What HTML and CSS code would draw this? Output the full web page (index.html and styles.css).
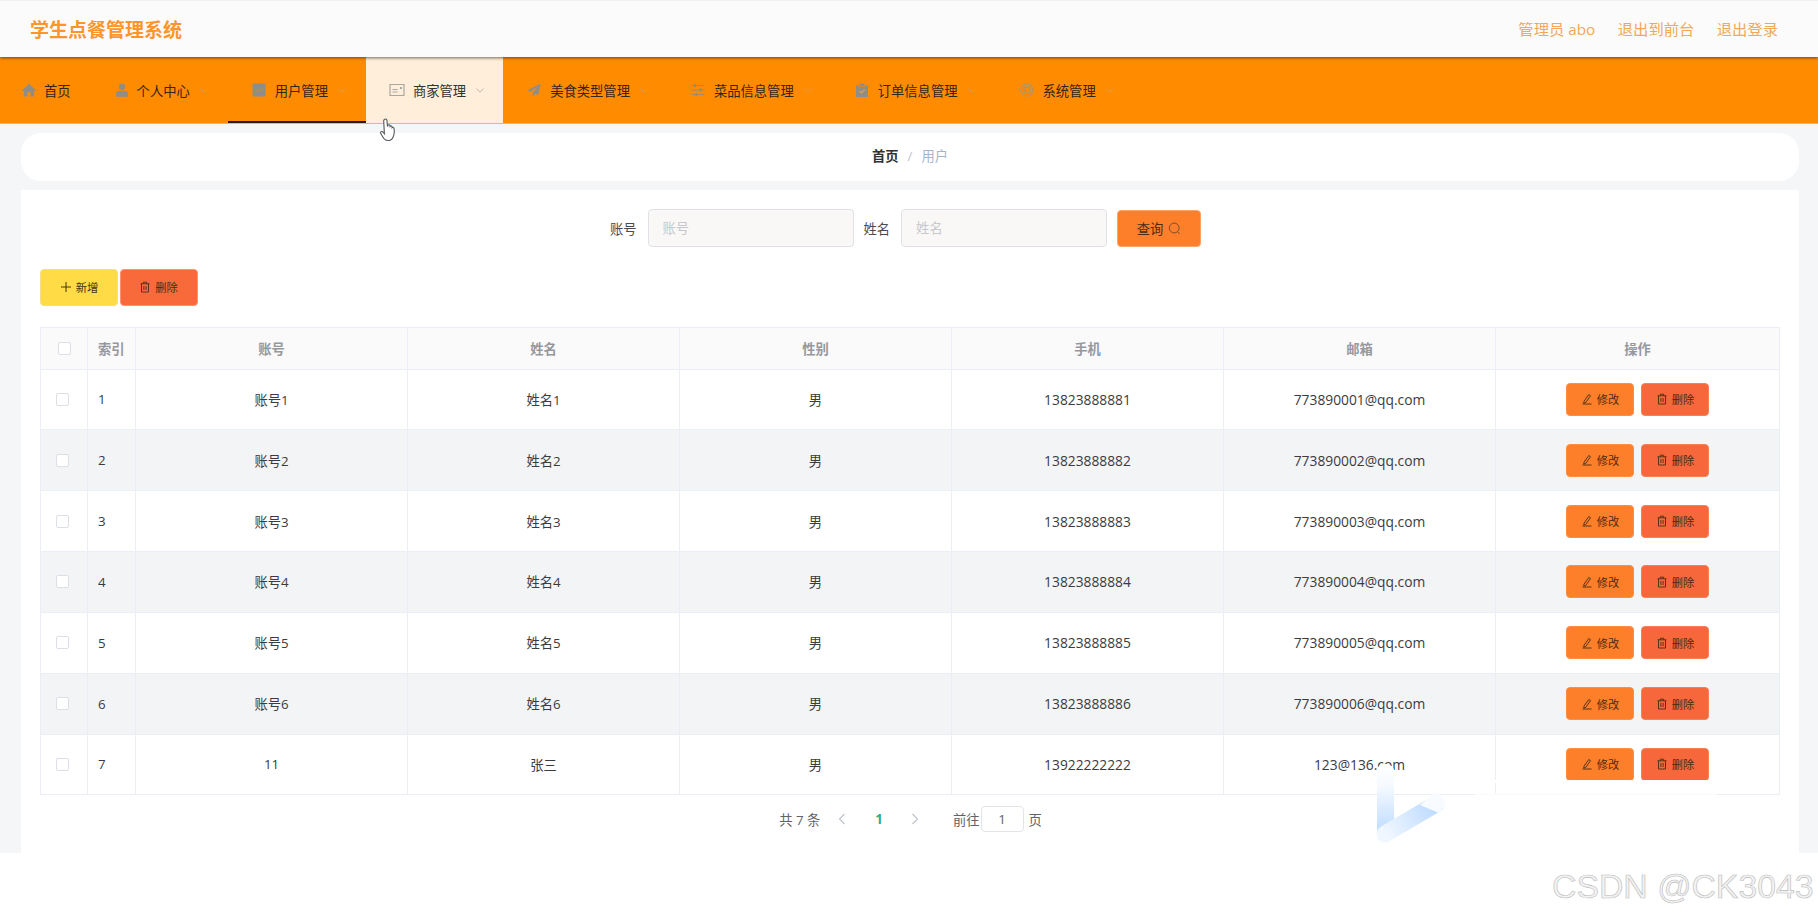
FILE: index.html
```html
<!DOCTYPE html>
<html lang="zh-CN">
<head>
<meta charset="utf-8">
<title>学生点餐管理系统</title>
<link rel="stylesheet" href="styles.css">
</head>
<body>
<svg class="sprite" aria-hidden="true">
  <symbol id="i-chev" viewBox="0 0 8 5"><path d="M.5.5 4 4.200 7.500.5" fill="none" stroke="currentColor" stroke-width="1"/></symbol>
  <symbol id="i-plus" viewBox="0 0 12 12"><path d="M6 1v10M1 6h10" fill="none" stroke="currentColor" stroke-width="1"/></symbol>
  <symbol id="i-trash" viewBox="0 0 12 12"><path d="M1.500 2.800h9M4.300 2.800V1.200h3.400v1.600M2.500 2.800v8.200h7V2.800M4.900 5v4M7.100 5v4" fill="none" stroke="currentColor" stroke-width=".9"/></symbol>
  <symbol id="i-edit" viewBox="0 0 12 12"><path d="M3 8.200 7.800 1.500l1.700 1.200L4.800 9.400l-2 .7zM1.500 11h9" fill="none" stroke="currentColor" stroke-width=".9"/></symbol>
  <symbol id="i-search" viewBox="0 0 13 13"><circle cx="6.200" cy="6" r="4.900" fill="none" stroke="currentColor" stroke-width="1"/><path d="m9.500 9.500 2 2.300" fill="none" stroke="currentColor" stroke-width="1"/></symbol>
</svg>

<div class="page">
  <header class="topbar">
    <div class="brand">学生点餐管理系统</div>
    <div class="top-links">
      <span>管理员 abo</span>
      <span>退出到前台</span>
      <span>退出登录</span>
    </div>
  </header>

  <nav class="nav">
    <a class="nav-item nav-first">
      <svg class="nav-icon" viewBox="0 0 14 14"><path d="M7 .8 0 7.200l1 1 .8-.7V13.600h3.700V9.300h3V13.600h3.700V7.500l.8.700 1-1z"/></svg>
      <span>首页</span>
    </a>
    <a class="nav-item nav-tight">
      <svg class="nav-icon" viewBox="0 0 14 14"><circle cx="7" cy="3.700" r="3.200"/><path d="M1 13.800V11c0-2 1.700-3.200 3.500-3.200h5c1.800 0 3.500 1.200 3.500 3.200v2.800z"/></svg>
      <span>个人中心</span>
      <svg class="chev"><use href="#i-chev"/></svg>
    </a>
    <a class="nav-item is-active">
      <svg class="nav-icon" viewBox="0 0 14 14"><path d="M.5.500h13v13H.5z"/><path d="m2.500 10 3-3 2 1.500 4-4.500" fill="none" stroke="#c98a3a" stroke-width="1"/></svg>
      <span>用户管理</span>
      <svg class="chev"><use href="#i-chev"/></svg>
    </a>
    <a class="nav-item is-hover">
      <svg class="nav-icon nav-icon-wide" viewBox="0 0 16 14"><path d="M1 1.500h14v11H1z" fill="none" stroke="#a9a7a3" stroke-width="1.200"/><path d="M3.500 6.500h5M3.500 9h5" fill="none" stroke="#a9a7a3" stroke-width="1"/><path d="M11 4h2v2h-2z" fill="#a9a7a3"/></svg>
      <span>商家管理</span>
      <svg class="chev"><use href="#i-chev"/></svg>
    </a>
    <a class="nav-item nav-six">
      <svg class="nav-icon" viewBox="0 0 14 14"><path d="M13.800.400.300 7.200l3.400 1.500L11.500 3 5.700 9.700v4l2.500-3 2.900 1.300z"/></svg>
      <span>美食类型管理</span>
      <svg class="chev"><use href="#i-chev"/></svg>
    </a>
    <a class="nav-item nav-six">
      <svg class="nav-icon" viewBox="0 0 14 14"><path d="M.5 2.500h13M.5 7h13M.5 11.500h13" fill="none" stroke="#a08a68" stroke-width="1"/><path d="M3 .8h2v3.400H3zM8.500 5.300h2v3.400h-2zM4.500 9.800h2v3.400h-2z" fill="#a08a68"/></svg>
      <span>菜品信息管理</span>
      <svg class="chev"><use href="#i-chev"/></svg>
    </a>
    <a class="nav-item nav-six">
      <svg class="nav-icon" viewBox="0 0 14 14"><path d="M1 2h2.500v1.500h7V2H13v12H1zM4.500.5h5v2.500h-5z"/><path d="m4.300 8 2 2 3.500-3.500" fill="none" stroke="#d8a050" stroke-width="1.200"/></svg>
      <span>订单信息管理</span>
      <svg class="chev"><use href="#i-chev"/></svg>
    </a>
    <a class="nav-item nav-last">
      <svg class="nav-icon nav-icon-wide" viewBox="0 0 16 16"><circle cx="8" cy="8" r="7" fill="none" stroke="#b9935c" stroke-width="1.600"/><circle cx="8" cy="8" r="3.800" fill="none" stroke="#b9935c" stroke-width="1.600"/></svg>
      <span>系统管理</span>
      <svg class="chev"><use href="#i-chev"/></svg>
    </a>
  </nav>

  <main class="content">
    <div class="crumbs">
      <span class="crumb-home">首页</span>
      <span class="crumb-sep">/</span>
      <span class="crumb-cur">用户</span>
    </div>

    <section class="card">
      <form class="search">
        <label class="search-label">账号</label>
        <input class="search-input" placeholder="账号">
        <label class="search-label">姓名</label>
        <input class="search-input" placeholder="姓名">
        <button class="btn btn-query" type="button">查询<svg class="ico-search"><use href="#i-search"/></svg></button>
      </form>

      <div class="toolbar">
        <button class="btn btn-add" type="button"><svg class="ico"><use href="#i-plus"/></svg>新增</button>
        <button class="btn btn-del-top" type="button"><svg class="ico"><use href="#i-trash"/></svg>删除</button>
      </div>

      <table class="grid">
        <colgroup>
          <col class="c-check"><col class="c-index"><col class="c-data"><col class="c-data"><col class="c-data"><col class="c-data"><col class="c-data"><col class="c-ops">
        </colgroup>
        <thead>
          <tr>
            <th class="cell-check head-check"><span class="checkbox"></span></th>
            <th class="cell-index head-index">索引</th>
            <th>账号</th><th>姓名</th><th>性别</th><th>手机</th><th>邮箱</th><th>操作</th>
          </tr>
        </thead>
        <tbody>
          <tr>
            <td class="cell-check"><span class="checkbox"></span></td><td class="cell-index">1</td>
            <td>账号1</td><td>姓名1</td><td>男</td><td class="cell-latin">13823888881</td><td class="cell-latin">773890001@qq.com</td>
            <td><div class="ops"><button class="btn btn-edit" type="button"><svg class="ico"><use href="#i-edit"/></svg>修改</button><button class="btn btn-del" type="button"><svg class="ico"><use href="#i-trash"/></svg>删除</button></div></td>
          </tr>
          <tr>
            <td class="cell-check"><span class="checkbox"></span></td><td class="cell-index">2</td>
            <td>账号2</td><td>姓名2</td><td>男</td><td class="cell-latin">13823888882</td><td class="cell-latin">773890002@qq.com</td>
            <td><div class="ops"><button class="btn btn-edit" type="button"><svg class="ico"><use href="#i-edit"/></svg>修改</button><button class="btn btn-del" type="button"><svg class="ico"><use href="#i-trash"/></svg>删除</button></div></td>
          </tr>
          <tr>
            <td class="cell-check"><span class="checkbox"></span></td><td class="cell-index">3</td>
            <td>账号3</td><td>姓名3</td><td>男</td><td class="cell-latin">13823888883</td><td class="cell-latin">773890003@qq.com</td>
            <td><div class="ops"><button class="btn btn-edit" type="button"><svg class="ico"><use href="#i-edit"/></svg>修改</button><button class="btn btn-del" type="button"><svg class="ico"><use href="#i-trash"/></svg>删除</button></div></td>
          </tr>
          <tr>
            <td class="cell-check"><span class="checkbox"></span></td><td class="cell-index">4</td>
            <td>账号4</td><td>姓名4</td><td>男</td><td class="cell-latin">13823888884</td><td class="cell-latin">773890004@qq.com</td>
            <td><div class="ops"><button class="btn btn-edit" type="button"><svg class="ico"><use href="#i-edit"/></svg>修改</button><button class="btn btn-del" type="button"><svg class="ico"><use href="#i-trash"/></svg>删除</button></div></td>
          </tr>
          <tr>
            <td class="cell-check"><span class="checkbox"></span></td><td class="cell-index">5</td>
            <td>账号5</td><td>姓名5</td><td>男</td><td class="cell-latin">13823888885</td><td class="cell-latin">773890005@qq.com</td>
            <td><div class="ops"><button class="btn btn-edit" type="button"><svg class="ico"><use href="#i-edit"/></svg>修改</button><button class="btn btn-del" type="button"><svg class="ico"><use href="#i-trash"/></svg>删除</button></div></td>
          </tr>
          <tr>
            <td class="cell-check"><span class="checkbox"></span></td><td class="cell-index">6</td>
            <td>账号6</td><td>姓名6</td><td>男</td><td class="cell-latin">13823888886</td><td class="cell-latin">773890006@qq.com</td>
            <td><div class="ops"><button class="btn btn-edit" type="button"><svg class="ico"><use href="#i-edit"/></svg>修改</button><button class="btn btn-del" type="button"><svg class="ico"><use href="#i-trash"/></svg>删除</button></div></td>
          </tr>
          <tr>
            <td class="cell-check"><span class="checkbox"></span></td><td class="cell-index">7</td>
            <td>11</td><td>张三</td><td>男</td><td class="cell-latin">13922222222</td><td class="cell-latin">123@136.com</td>
            <td><div class="ops"><button class="btn btn-edit" type="button"><svg class="ico"><use href="#i-edit"/></svg>修改</button><button class="btn btn-del" type="button"><svg class="ico"><use href="#i-trash"/></svg>删除</button></div></td>
          </tr>
        </tbody>
      </table>

      <div class="pager">
        <span class="pager-total">共 7 条</span>
        <svg class="pager-arrow" viewBox="0 0 8 12"><path d="M6.500 1 1.500 6l5 5" fill="none" stroke="currentColor" stroke-width="1.200"/></svg>
        <span class="pager-num">1</span>
        <svg class="pager-arrow" viewBox="0 0 8 12"><path d="m1.500 1 5 5-5 5" fill="none" stroke="currentColor" stroke-width="1.200"/></svg>
        <span class="pager-goto">前往</span>
        <span class="pager-box">1</span>
        <span class="pager-unit">页</span>
      </div>
    </section>
  </main>
</div>

<svg class="cursor" viewBox="0 0 17 24"><path d="M5 1.200c.9-.5 1.800 0 1.900 1l.6 6.300.5-1.300c.5-.8 1.600-.6 1.900.3l.2 1c.5-.8 1.600-.6 1.900.3l.1.900c.6-.6 1.700-.3 1.900.7.500 2.600.4 5.500-.6 8-.7 2-1.900 3.800-4.100 4.100-2.300.3-4.400-.5-5.700-2.300L.8 15.500c-.6-1-.1-2 .9-2 .9 0 1.700.8 2.700 2.100L3.700 3c-.1-.8.500-1.500 1.300-1.800z" fill="#fff" stroke="#55565c" stroke-width="1.100"/></svg>

<div class="smudge"></div>
<svg class="wm-logo" viewBox="0 -5 70 81">
  <defs>
    <linearGradient id="wm-a" x1="0" y1="0" x2="0" y2="1"><stop offset="0" stop-color="#fff"/><stop offset=".3" stop-color="#f6faff"/><stop offset="1" stop-color="#b9d9ff"/></linearGradient>
    <linearGradient id="wm-b" gradientUnits="userSpaceOnUse" x1="9" y1="66" x2="62" y2="36"><stop offset="0" stop-color="#f1f7ff"/><stop offset="1" stop-color="#b9d9ff"/></linearGradient>
  </defs>
  <path d="M1 3C1-2 5-4 9-4s9 2 9 7v56l-17 9z" fill="url(#wm-a)"/>
  <path d="M9 66 60 36" fill="none" stroke="url(#wm-b)" stroke-width="17" stroke-linecap="round"/>
  <path d="M44 37 58 25Q70 27 69 38L63 45Z" fill="#f8fbff"/>
</svg>
<div class="wm-text">CSDN @CK3043</div>
</body>
</html>
```

FILE: styles.css
```css
* { box-sizing: border-box; }

html, body {
  margin: 0;
  height: 100%;
  background: #fff;
}

body {
  font-family: "Open Sans", "Noto Sans CJK SC", sans-serif;
  font-size: 13.3px;
  color: #303133;
  overflow: hidden;
}

.sprite { display: none; }

.page { background: #f5f6f8; }

/* top bar */
.topbar {
  position: relative;
  z-index: 2;
  height: 57px;
  display: flex;
  align-items: center;
  justify-content: space-between;
  padding: 0 40px 0 30px;
  background: #fbfbfc;
  border-top: 1px solid #f0f0f3;
  box-shadow: 0 1px 3px rgba(40, 30, 20, .65);
}

.brand {
  font-size: 19px;
  font-weight: 700;
  color: #fd952a;
}

.top-links {
  display: flex;
  gap: 22.5px;
  padding-bottom: 2px;
  font-size: 15.3px;
  color: #f2a858;
}

/* nav */
.nav {
  height: 67px;
  display: flex;
  background: #ff8c00;
  border-bottom: 1px solid #ffb25c;
}

.nav-item {
  display: flex;
  align-items: center;
  height: 66px;
  padding: 0 20px 0 24px;
  color: #33261c;
  white-space: nowrap;
}

.nav-first { padding: 0 22px; }
.nav-tight { padding-left: 22px; }
.nav-six { padding-right: 19px; }
.nav-last { padding-left: 25px; }

.nav-first .nav-icon,
.nav-tight .nav-icon { margin-right: 8px; }

.nav-icon {
  width: 14px;
  height: 14px;
  margin-right: 9px;
  flex: none;
  fill: #8f8d88;
}

.nav-icon-wide {
  width: 16px;
  margin-right: 8px;
  margin-left: -1px;
}

.chev {
  width: 8px;
  height: 5px;
  margin-left: 10px;
  color: #e29a48;
  flex: none;
}

.is-active {
  box-shadow: inset 0 -2px 0 #2c1c22;
}

.is-hover {
  padding-right: 19px;
  background: #feeeda;
  color: #303133;
}

.is-hover .chev { color: #bdb9b2; }

/* content */
.content { padding: 9px 19px 0 21px; }

.crumbs {
  height: 48px;
  display: flex;
  align-items: center;
  justify-content: center;
  gap: 9px;
  padding: 0 0 3px 0;
  background: #fff;
  border-radius: 20px;
}

.crumb-home { font-weight: 700; color: #303133; }
.crumb-sep { color: #c0c4cc; }
.crumb-cur { color: #a8b4c8; }

.card {
  margin-top: 9px;
  height: 663px;
  padding: 19px 20px 0 19px;
  background: #fff;
}

/* search */
.search {
  display: flex;
  align-items: center;
  justify-content: center;
  padding-right: 8px;
  height: 38px;
}

.search-label {
  margin-right: 11px;
  color: #4a4b4f;
}

.search-input {
  width: 206px;
  height: 38px;
  margin-right: 10px;
  padding: 0 14px;
  font: inherit;
  background: #faf8f7;
  border: 1px solid #dfe1e6;
  border-radius: 4px;
  outline: none;
}

.search-input::placeholder { color: #c6c8cd; }

.btn {
  display: inline-flex;
  align-items: center;
  justify-content: center;
  padding: 0;
  font-family: inherit;
  color: #4a2c14;
  border: 1px solid transparent;
  border-radius: 4px;
  cursor: pointer;
}

.btn-query {
  width: 84px;
  height: 37px;
  font-size: 13.3px;
  background: #fd7f29;
  border-color: #fda368;
}

.ico-search {
  width: 13px;
  height: 13px;
  margin-left: 5px;
  color: #7a5030;
}

.ico {
  width: 12px;
  height: 12px;
  margin-right: 4px;
  flex: none;
}

/* toolbar */
.toolbar {
  display: flex;
  gap: 1.5px;
  margin-top: 21.5px;
}

.toolbar .btn {
  width: 78px;
  height: 37.5px;
  font-size: 11.3px;
}

.btn-add {
  background: #ffdc45;
  border-color: #f3dc8a;
  color: #3e3518;
}

.btn-del-top {
  background: #f96a3a;
  border-color: #fa9272;
}

/* table */
.grid {
  width: 1739px;
  margin-top: 20.5px;
  table-layout: fixed;
  border-collapse: collapse;
  color: #3a3b3f;
}

.c-check { width: 47px; }
.c-index { width: 48px; }
.c-data { width: 272px; }
.c-ops { width: 284px; }

.grid th,
.grid td {
  padding: 0;
  text-align: center;
  border: 1px solid #ebeef5;
}

.grid th {
  height: 42px;
  font-weight: 700;
  font-size: 13.3px;
  color: #96989d;
  background: #fafafb;
}

.grid td { height: 60.85px; }

.grid tbody tr:nth-child(even) td { background: #f3f4f6; }

.grid .cell-latin { font-size: 13.8px; }

.grid .cell-index {
  text-align: left;
  padding-left: 10px;
}

.grid .head-index { padding-left: 10px; }

.grid .cell-check {
  text-align: left;
  padding-left: 15px;
}

.grid .head-check { padding-left: 17px; }

.checkbox {
  display: block;
  width: 13px;
  height: 13px;
  background: #fff;
  border: 1px solid #dcdfe6;
  border-radius: 2px;
}

.ops {
  display: flex;
  justify-content: center;
  gap: 7px;
}

.ops .btn {
  width: 68px;
  height: 33px;
  font-size: 11.2px;
}

.btn-edit { background: #fd7f29; border-color: #fd8f45; }
.btn-del { background: #f6683b; border-color: #f77f59; }

/* pager */
.pager {
  display: flex;
  align-items: center;
  justify-content: center;
  margin-top: 11px;
  padding-left: 2px;
  height: 26px;
  color: #606266;
}

.pager-arrow {
  width: 8px;
  height: 12px;
  color: #c0c4cc;
}

.pager-total { margin-right: 18px; }
.pager-num {
  margin: 0 28px 0 29px;
  font-weight: 700;
  color: #2bb08f;
}
.pager-goto { margin-left: 34px; margin-right: 1px; }

.pager-box {
  width: 43px;
  height: 26px;
  display: flex;
  align-items: center;
  justify-content: center;
  border: 1px solid #e2e4e9;
  border-radius: 4px;
}

.pager-unit { margin-left: 5px; }

/* overlays lying over the page */
.cursor {
  position: absolute;
  left: 380px;
  top: 118px;
  width: 17px;
  height: 24px;
  z-index: 5;
}

.smudge {
  position: absolute;
  left: 1475px;
  top: 780px;
  width: 241px;
  height: 17px;
  background: linear-gradient(to bottom, #fff 0 3px, transparent 3px 13px, rgba(255, 255, 255, .75) 13px 17px);
}

.wm-logo {
  position: absolute;
  left: 1376px;
  top: 763px;
  width: 70px;
  height: 81px;
}

.wm-text {
  position: absolute;
  left: 1552px;
  top: 866px;
  font-family: "Liberation Sans", Arial, sans-serif;
  font-size: 33.8px;
  line-height: 40px;
  white-space: nowrap;
  color: #f2f2f2;
  -webkit-text-stroke: .6px #bcbcbc;
}
```
